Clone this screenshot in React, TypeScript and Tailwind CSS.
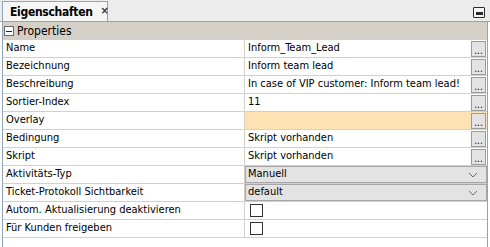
import React from 'react';

type Row = {
  label: string;
  value?: string;
  kind: 'text' | 'combo' | 'check';
  highlight?: boolean;
};

const rows: Row[] = [
  { label: 'Name', value: 'Inform_Team_Lead', kind: 'text' },
  { label: 'Bezeichnung', value: 'Inform team lead', kind: 'text' },
  { label: 'Beschreibung', value: 'In case of VIP customer: Inform team lead!', kind: 'text' },
  { label: 'Sortier-Index', value: '11', kind: 'text' },
  { label: 'Overlay', value: '', kind: 'text', highlight: true },
  { label: 'Bedingung', value: 'Skript vorhanden', kind: 'text' },
  { label: 'Skript', value: 'Skript vorhanden', kind: 'text' },
  { label: 'Aktivitäts-Typ', value: 'Manuell', kind: 'combo' },
  { label: 'Ticket-Protokoll Sichtbarkeit', value: 'default', kind: 'combo' },
  { label: 'Autom. Aktualisierung deaktivieren', kind: 'check' },
  { label: 'Für Kunden freigeben', kind: 'check' },
];

const EllipsisButton = () => (
  <div className="w-[15px] h-[16px] border border-[#9a9a9a] bg-[#e3e3e3] flex items-end justify-center text-[10px] leading-[10px] text-black shrink-0 mr-[1px]">
    ...
  </div>
);

const Chevron = () => (
  <svg width="10" height="6" viewBox="0 0 10 6" className="shrink-0">
    <path d="M1 1 L5 5 L9 1" fill="none" stroke="#6a6a6a" strokeWidth="1" />
  </svg>
);

export default function App() {
  return (
    <div
      className="w-[490px] h-[247px] bg-white overflow-hidden flex flex-col text-[11px] text-black"
      style={{ fontFamily: '"DejaVu Sans Condensed", "Liberation Sans", Arial, sans-serif' }}
    >
      {/* tab bar */}
      <div className="h-[22px] flex items-stretch bg-[#ececec] border-b border-[#8fa4bd] shrink-0">
        <div className="ml-[2px] w-[106px] shrink-0 bg-[#f6f6f6] border-l border-t border-r border-[#8fa4bd] flex items-center pl-[7px] gap-[8px] mt-[1px] whitespace-nowrap">
          <span className="font-bold text-[12px] tracking-[-0.3px]">Eigenschaften</span>
          <span className="font-bold text-[11px] text-[#333]">×</span>
        </div>
        <div className="flex-1 flex items-center justify-end pr-[5px]">
          <div className="w-[12px] h-[11px] border border-[#2a2a2a] rounded-[1px] flex items-center justify-center bg-[#f4f4f4] mt-[4px]">
            <div className="w-[7px] h-[3px] bg-[#2a2a2a] mt-[1px]" />
          </div>
        </div>
      </div>

      <div className="flex-1 mx-[2px] border-l border-r border-[#8fa4bd] flex flex-col">
        {/* category header */}
        <div className="h-[18px] bg-[#d4d0c8] flex items-center pl-[1px] gap-[3px] shrink-0">
          <div className="w-[10px] h-[10px] border border-[#6a6a6a] bg-white flex items-center justify-center">
            <div className="w-[6px] h-[1px] bg-[#222]" />
          </div>
          <span className="text-[12px]">Properties</span>
        </div>

        {rows.map((r) => (
          <div key={r.label} className="h-[18px] flex border-b border-[#d4d0c8] shrink-0">
            <div className="w-[242px] shrink-0 border-r border-[#d4d0c8] flex items-center pl-[3px] whitespace-nowrap">
              {r.label}
            </div>
            {r.kind === 'text' && (
              <div className={`flex-1 min-w-0 flex items-center justify-between pl-[3px] ${r.highlight ? 'bg-[#fde3b4]' : ''}`}>
                <span className="whitespace-nowrap overflow-hidden">{r.value}</span>
                <EllipsisButton />
              </div>
            )}
            {r.kind === 'combo' && (
              <div className="flex-1 flex items-center justify-between pl-[2px] pr-[8px] bg-[#e3e3e3] border border-[#a6a6a6]">
                <span>{r.value}</span>
                <Chevron />
              </div>
            )}
            {r.kind === 'check' && (
              <div className="flex-1 flex items-center pl-[5px]">
                <div className="w-[13px] h-[13px] border border-[#333] bg-white" />
              </div>
            )}
          </div>
        ))}
      </div>
    </div>
  );
}
